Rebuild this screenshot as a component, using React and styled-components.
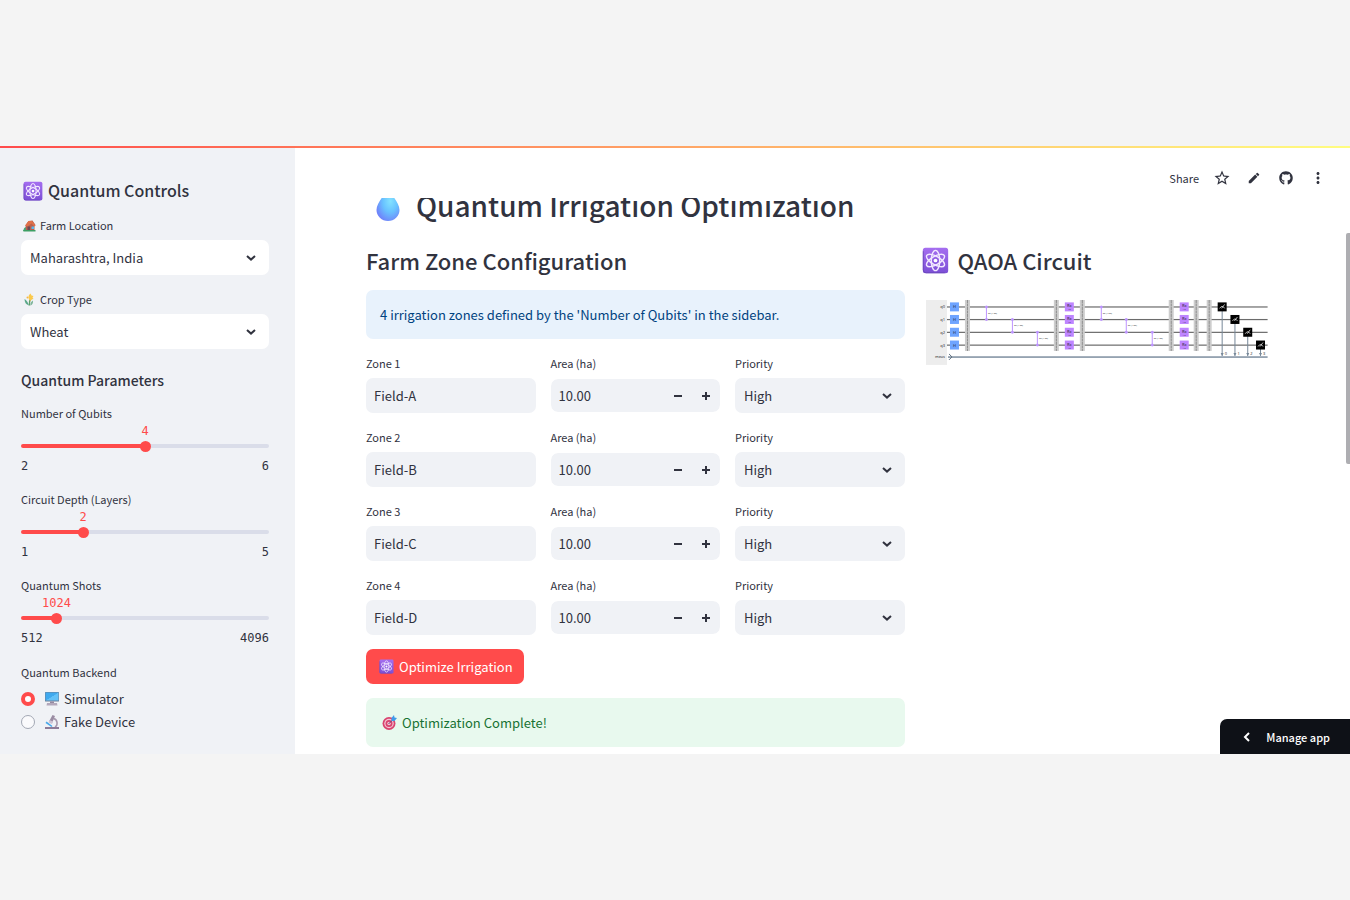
import React, { useId, useState } from "react";
import styled, { createGlobalStyle } from "styled-components";
import { MdStarBorder, MdEdit, MdMoreVert } from "react-icons/md";
import { FaGithub } from "react-icons/fa";

const ZONES = ["Field-A", "Field-B", "Field-C", "Field-D"];

// Emoji style icons

function AtomIcon({ size }) {
  const id = useId();
  return (
    <svg width={size} height={size} viewBox="0 0 32 32" aria-hidden="true">
      <defs>
        <linearGradient id={id} x1="0" y1="0" x2="0" y2="1">
          <stop offset="0" stopColor="#a56ef0" />
          <stop offset="1" stopColor="#7c4fd6" />
        </linearGradient>
      </defs>
      <rect x="1" y="1" width="30" height="30" rx="3" fill={`url(#${id})`} />
      <path d="M1.5 5v22q0 3.500 3.500 3.500h22" fill="none" stroke="#6a48b8" strokeWidth="1" />
      <g fill="none" stroke="#f2e8ff" strokeWidth="1.7">
        <ellipse cx="16" cy="16" rx="5" ry="12" />
        <ellipse cx="16" cy="16" rx="5" ry="12" transform="rotate(60 16 16)" />
        <ellipse cx="16" cy="16" rx="5" ry="12" transform="rotate(120 16 16)" />
      </g>
      <circle cx="16" cy="16" r="2.200" fill="#fff" />
    </svg>
  );
}

function DropIcon() {
  return (
    <svg width="24" height="36" viewBox="0 0 24 36" aria-hidden="true">
      <defs>
        <radialGradient id="drop" cx="0.6" cy="0.4" r="0.65">
          <stop offset="0" stopColor="#83e2ff" />
          <stop offset="0.5" stopColor="#68c2ff" />
          <stop offset="1" stopColor="#6f83fa" />
        </radialGradient>
      </defs>
      <path d="M12 1C10 7 .5 15 .5 23A11.500 11 0 0 0 23.500 23C23.500 15 14 7 12 1z" fill="url(#drop)" />
    </svg>
  );
}

function HouseIcon() {
  return (
    <svg width="13" height="13" viewBox="0 0 26 26" aria-hidden="true">
      <path d="M1 23q0-6 5-7l3-9 5 2v14z" fill="#3fa878" />
      <path d="M5 13 11 4l8-1 6 9-2 2v9H6z" fill="#b95f4d" />
      <path d="M4 13 11 4h7l7 9-2 2-6-6-8 6z" fill="#e0704a" />
      <rect x="9" y="15" width="5" height="8" fill="#6d4a55" />
      <rect x="17" y="15" width="5" height="5" fill="#56b8ee" />
      <path d="M0 22h25v3H1z" fill="#3d9e63" />
    </svg>
  );
}

function CropIcon() {
  return (
    <svg width="13" height="13" viewBox="0 0 26 26" aria-hidden="true">
      <path d="M13 25q-1-9 3-15" fill="none" stroke="#5f9d6b" strokeWidth="3" />
      <path d="M12 25q-9-3-9-13 6 3 9 13z" fill="#5aa88a" />
      <path d="M15 25q6-3 5-10-6 3-5 10z" fill="#7eb59b" />
      <path d="M12 13q-3-8 3-12l2 4 4 1-2 3 2 3-4 1-2 3z" fill="#fbc94b" />
      <circle cx="9" cy="9" r="2" fill="#f5b744" />
    </svg>
  );
}

function DesktopIcon() {
  return (
    <svg width="14" height="14" viewBox="0 0 28 28" aria-hidden="true">
      <defs>
        <linearGradient id="screen" x1="0" y1="0" x2="1" y2="1">
          <stop offset="0.5" stopColor="#3fa9ee" />
          <stop offset="0.52" stopColor="#62c1f8" />
        </linearGradient>
      </defs>
      <rect x="0" y="0" width="28" height="19" rx="1" fill="#6b7f99" />
      <rect x="1" y="1" width="26" height="16" fill="url(#screen)" />
      <path d="M10 19h8v4h-8z" fill="#9488a0" />
      <path d="M4 22h20l1 5H3z" fill="#b3a8bb" />
    </svg>
  );
}

function MicroscopeIcon() {
  return (
    <svg width="14" height="14" viewBox="0 0 28 28" aria-hidden="true">
      <path d="M17 7c9 2 9 14 3 17" fill="none" stroke="#a698ad" strokeWidth="3" />
      <path d="M15 0l5 2-6 14-6-3z" fill="#9a8ca3" />
      <path d="M9 10l7 3-2 5-7-3z" fill="#cfc4d4" />
      <path d="M3 13l12 9-2 2L1 16z" fill="#48a8ea" />
      <path d="M0 24h28v4H0z" fill="#8d7c98" />
    </svg>
  );
}

function TargetIcon() {
  return (
    <svg width="15" height="15" viewBox="0 0 30 30" aria-hidden="true">
      <circle cx="14" cy="17" r="13" fill="#d9436f" />
      <circle cx="14" cy="17" r="9.500" fill="#f3c6d4" />
      <circle cx="14" cy="17" r="7" fill="#d9436f" />
      <circle cx="14" cy="17" r="3.500" fill="#f3c6d4" />
      <path d="M13 18 22 9" stroke="#6d3f73" strokeWidth="2" />
      <path d="M19 11V6l5-6 1 5 5 1-5 6h-5z" fill="#3f9bea" />
    </svg>
  );
}

function ChevronDown() {
  return (
    <svg width="10" height="6" viewBox="0 0 10 6" aria-hidden="true">
      <path d="M1 1l4 3.600L9 1" fill="none" stroke="#31333f" strokeWidth="2" />
    </svg>
  );
}

// QAOA circuit drawing
const WIRES = [16.4, 29, 41.8, 54.6];

function Barrier({ x }) {
  return (
    <g>
      <rect x={x - 2} y="10" width="5" height="51" fill="#cdcdcd" />
      <path d={`M${x + 0.5} 10v51`} stroke="#8c8c8c" strokeWidth="1" strokeDasharray="3 0.500" />
    </g>
  );
}

function Coupling({ x, row }) {
  const top = WIRES[row];
  const bottom = WIRES[row + 1];
  return (
    <g fill="#be95ff">
      <rect x={x} y={top} width="1" height={bottom - top} />
      <circle cx={x + 0.5} cy={top + 0.5} r="1.500" />
      <circle cx={x + 0.5} cy={bottom + 0.5} r="1.500" />
      <text x={x + 2} y={top + 7.5} fontSize="2.300" fill="#222">ZZ (1.00)</text>
    </g>
  );
}

function Mixer({ x }) {
  return WIRES.map((y) => (
    <g key={y}>
      <rect x={x} y={y - 4} width="9" height="9" fill="#be85ff" />
      <text x={x + 4.5} y={y + 1} fontSize="4" textAnchor="middle" fill="#222">Rx</text>
      <text x={x + 4.5} y={y + 4} fontSize="2" textAnchor="middle" fill="#222">1.0</text>
    </g>
  ));
}

function CircuitDiagram() {
  return (
    <Diagram viewBox="0 0 360 80" role="img" aria-label="QAOA circuit">
      <rect x="7" y="10" width="21" height="65" fill="#ededed" />
      {WIRES.map((y, i) => (
        <g key={y}>
          <text x="26" y={y + 2} fontSize="4" textAnchor="end" fill="#222">q{i}</text>
          <rect x="28" y={y} width="321" height="1.200" fill="#6b6b6b" />
          <rect x="31" y={y - 4} width="9" height="9" fill="#6fa4ff" />
          <text x="35.5" y={y + 2} fontSize="4" textAnchor="middle" fill="#111">H</text>
        </g>
      ))}
      <text x="26" y="68" fontSize="4" textAnchor="end" fill="#222">meas</text>
      <rect x="29" y="66.3" width="320" height="1.700" fill="#8d9cab" />
      <path d="M30 64l3 3-3 3" fill="none" stroke="#5f7080" strokeWidth="1" />
      {[48, 137, 163, 252, 277, 290].map((x) => <Barrier key={x} x={x} />)}
      {[67, 93, 118].map((x, i) => <Coupling key={x} x={x} row={i} />)}
      {[182, 207, 233].map((x, i) => <Coupling key={x} x={x} row={i} />)}
      <Mixer x={146} />
      <Mixer x={261} />
      {WIRES.map((y, i) => {
        const x = 303 + i * 12.8;
        return (
          <g key={y}>
            <rect x={x} y={y} width="1" height={66 - y} fill="#778899" />
            <path d={`M${x - 1} 63h3l-1.500 3z`} fill="#778899" />
            <text x={x + 3} y="65" fontSize="4" fill="#222">{i}</text>
            <rect x={x - 4} y={y - 4} width="9" height="9" fill="#000" />
            <path d={`M${x - 2} ${y + 2}q2.500-4 5 0M${x} ${y + 2}l3-4`} fill="none" stroke="#fff" strokeWidth="0.7" />
          </g>
        );
      })}
    </Diagram>
  );
}

// Form parts

function SelectField({ label, icon, options, light }) {
  const id = useId();
  return (
    <div>
      <Label htmlFor={id} $icon={icon}>{icon}{label}</Label>
      <SelectBox $light={light}>
        <select id={id}>
          {options.map((option) => <option key={option}>{option}</option>)}
        </select>
        <ChevronDown />
      </SelectBox>
    </div>
  );
}

function SliderField({ label, min, max, step = 1, initial }) {
  const id = useId();
  const [value, setValue] = useState(initial);
  const percent = ((value - min) / (max - min)) * 100;
  return (
    <div>
      <SliderLabel htmlFor={id}>{label}</SliderLabel>
      <ValueRow>
        <Value htmlFor={id} style={{ left: `${percent}%` }}>{value}</Value>
      </ValueRow>
      <Track style={{ "--fill": `${percent}%` }}>
        <Range
          id={id}
          type="range"
          min={min}
          max={max}
          step={step}
          value={value}
          onChange={(e) => setValue(Number(e.target.value))}
        />
      </Track>
      <Limits>
        <span>{min}</span>
        <span>{max}</span>
      </Limits>
    </div>
  );
}

function ZoneRow({ number, name }) {
  const id = useId();
  const [area, setArea] = useState("10.00");
  const change = (by) => setArea((Number(area) + by).toFixed(2));
  return (
    <Zone>
      <div>
        <Label htmlFor={`${id}-name`}>Zone {number}</Label>
        <TextInput id={`${id}-name`} defaultValue={name} />
      </div>
      <div>
        <Label htmlFor={`${id}-area`}>Area (ha)</Label>
        <NumberBox>
          <input
            id={`${id}-area`}
            type="number"
            step="0.01"
            value={area}
            onChange={(e) => setArea(e.target.value)}
          />
          <button type="button" aria-label="Decrease area" onClick={() => change(-1)}>
            <svg width="8" height="8" viewBox="0 0 8 8"><path d="M0 4h8" stroke="#31333f" strokeWidth="2" /></svg>
          </button>
          <button type="button" aria-label="Increase area" onClick={() => change(1)}>
            <svg width="8" height="8" viewBox="0 0 8 8"><path d="M0 4h8M4 0v8" stroke="#31333f" strokeWidth="2" /></svg>
          </button>
        </NumberBox>
      </div>
      <SelectField label="Priority" options={["High", "Medium", "Low"]} />
    </Zone>
  );
}

export default function App() {
  return (
    <>
      <GlobalStyle />
      <Shell>
        <Sidebar>
          <SideTitle><AtomIcon size={20} />Quantum Controls</SideTitle>
          <SelectField light icon={<HouseIcon />} label="Farm Location" options={["Maharashtra, India"]} />
          <SelectField light icon={<CropIcon />} label="Crop Type" options={["Wheat"]} />
          <SideHeading>Quantum Parameters</SideHeading>
          <SliderField label="Number of Qubits" min={2} max={6} initial={4} />
          <SliderField label="Circuit Depth (Layers)" min={1} max={5} initial={2} />
          <SliderField label="Quantum Shots" min={512} max={4096} step={512} initial={1024} />
          <RadioGroup>
            <legend>Quantum Backend</legend>
            <RadioLabel>
              <input type="radio" name="backend" defaultChecked />
              <DesktopIcon />
              Simulator
            </RadioLabel>
            <RadioLabel>
              <input type="radio" name="backend" />
              <MicroscopeIcon />
              Fake Device
            </RadioLabel>
          </RadioGroup>
        </Sidebar>
        <Main>
          <Toolbar>
            <ToolButton type="button">Share</ToolButton>
            <ToolButton type="button" aria-label="Favorite"><MdStarBorder size={18} /></ToolButton>
            <ToolButton type="button" aria-label="Edit"><MdEdit size={14} /></ToolButton>
            <ToolButton type="button" aria-label="GitHub"><FaGithub size={14} /></ToolButton>
            <ToolButton type="button" aria-label="More"><MdMoreVert size={18} /></ToolButton>
          </Toolbar>
          <Content>
            <Title><DropIcon />Quantum Irrigation Optimization</Title>
            <Columns>
              <Column>
                <Heading>Farm Zone Configuration</Heading>
                <Alert>4 irrigation zones defined by the 'Number of Qubits' in the sidebar.</Alert>
                {ZONES.map((name, index) => (
                  <ZoneRow key={name} number={index + 1} name={name} />
                ))}
                <PrimaryButton type="button"><AtomIcon size={15} />Optimize Irrigation</PrimaryButton>
                <Alert $success><TargetIcon />Optimization Complete!</Alert>
              </Column>
              <Column>
                <Heading><AtomIcon size={27} />QAOA Circuit</Heading>
                <CircuitDiagram />
              </Column>
            </Columns>
          </Content>
          <ScrollThumb />
        </Main>
        <ManageButton type="button">
          <svg width="7" height="10" viewBox="0 0 7 10" aria-hidden="true">
            <path d="M6 1L2 5l4 4" fill="none" stroke="#fff" strokeWidth="2" />
          </svg>
          Manage app
        </ManageButton>
      </Shell>
    </>
  );
}

const GlobalStyle = createGlobalStyle`
  * {
    box-sizing: border-box;
  }
  body {
    margin: 0;
    background: #f4f4f4;
    color: #31333f;
    font-family: "Noto Sans CJK SC", "Open Sans", sans-serif;
    font-size: 13px;
  }
  h1, h2, h3 {
    margin: 0;
    font-weight: 500;
  }
  button, input, select {
    font: inherit;
    color: inherit;
  }
  svg {
    flex: none;
  }
`;

const Shell = styled.div`
  position: relative;
  display: flex;
  height: calc(100vh - 292px);
  min-height: 608px;
  margin: 146px 0;
  overflow: hidden;
  background: linear-gradient(90deg, #ff4b4b, #fffd80) top / 100% 2px no-repeat #fff;
  padding-top: 2px;
`;

const Sidebar = styled.aside`
  flex: none;
  width: 295px;
  padding: 32px 26px 0 21px;
  display: flex;
  flex-direction: column;
  gap: 14px;
  background: #f0f2f6;
`;

const SideTitle = styled.h2`
  display: flex;
  align-items: center;
  gap: 5px;
  padding-left: 2px;
  font-size: 16px;
  line-height: 21px;
`;

const SideHeading = styled.h3`
  padding-top: 7px;
  font-size: 14px;
  line-height: 20px;
`;

const Label = styled.label`
  display: flex;
  align-items: center;
  gap: 4px;
  margin-bottom: 4px;
  padding-left: ${(p) => (p.$icon ? "2px" : 0)};
  font-size: 11px;
  line-height: 21px;
`;

const SliderLabel = styled.label`
  display: block;
  padding-bottom: 2px;
  font-size: 11px;
  line-height: 19px;
`;

const SelectBox = styled.div`
  position: relative;
  select {
    display: block;
    width: 100%;
    height: 35px;
    padding: 0 30px 0 9px;
    border: 0;
    border-radius: 7px;
    appearance: none;
    background: ${(p) => (p.$light ? "#fff" : "#f0f2f6")};
  }
  svg {
    position: absolute;
    right: 13px;
    top: 15px;
    pointer-events: none;
  }
`;

const ValueRow = styled.div`
  position: relative;
  height: 13px;
  font-family: "DejaVu Sans Mono", monospace;
  font-size: 12px;
  line-height: 13px;
  color: #ff4b4b;
`;

const Value = styled.output`
  position: absolute;
  transform: translateX(-50%);
`;

const Track = styled.div`
  height: 16px;
  display: flex;
  align-items: center;
  &::before {
    content: "";
    flex: none;
    width: 100%;
    height: 4px;
    border-radius: 2px;
    background: linear-gradient(90deg, #ff4b4b var(--fill), #dadde9 var(--fill));
  }
`;

const Range = styled.input`
  flex: none;
  width: calc(100% + 10px);
  height: 16px;
  margin: 0 0 0 calc(-100% - 5px);
  appearance: none;
  background: transparent;
  &::-webkit-slider-thumb {
    appearance: none;
    width: 11px;
    height: 11px;
    border-radius: 50%;
    background: #ff4b4b;
  }
`;

const Limits = styled.div`
  display: flex;
  justify-content: space-between;
  padding: 3px 0 1px;
  font-family: "DejaVu Sans Mono", monospace;
  font-size: 12px;
  line-height: 18px;
`;

const RadioGroup = styled.fieldset`
  margin: 0;
  padding: 0;
  border: 0;
  legend {
    padding: 0 0 4px;
    font-size: 11px;
    line-height: 21px;
  }
`;

const RadioLabel = styled.label`
  display: flex;
  align-items: center;
  line-height: 23px;
  input {
    appearance: none;
    width: 14px;
    height: 14px;
    margin: 0 10px 0 0;
    border: 1px solid #a3a8b4;
    border-radius: 50%;
    background: #fafafc;
  }
  input:checked {
    border: 4px solid #ff4b4b;
    background: #fff;
  }
  svg {
    margin-right: 5px;
  }
`;

const Main = styled.main`
  position: relative;
  flex: 1;
  min-width: 0;
  display: flex;
  flex-direction: column;
`;

const Toolbar = styled.header`
  flex: none;
  display: flex;
  justify-content: flex-end;
  align-items: center;
  gap: 14px;
  height: 50px;
  padding: 10px 23px 0 0;
`;

const ToolButton = styled.button`
  display: flex;
  justify-content: center;
  min-width: 18px;
  padding: 0;
  border: 0;
  background: none;
  font-size: 11px;
`;

const Content = styled.div`
  flex: 1;
  min-height: 0;
  overflow: hidden;
  padding: 0 71px;
`;

const Title = styled.h1`
  display: flex;
  align-items: center;
  gap: 16px;
  margin-top: -11px;
  padding-left: 10px;
  font-size: 28px;
  line-height: 36px;
  white-space: nowrap;
`;

const Columns = styled.div`
  display: grid;
  grid-template-columns: 3fr 2fr;
  gap: 14px;
  margin-top: 22px;
`;

const Column = styled.section`
  display: flex;
  flex-direction: column;
  align-items: flex-start;
  gap: 14px;
  min-width: 0;
`;

const Heading = styled.h2`
  display: flex;
  align-items: center;
  gap: 8px;
  padding-bottom: 1px;
  font-size: 22px;
  line-height: 30px;
  svg {
    margin-left: 3px;
  }
`;

const Alert = styled.div`
  display: flex;
  align-items: center;
  gap: 5px;
  width: 100%;
  min-height: 49px;
  padding: 10px ${(p) => (p.$success ? "16px" : "14px")};
  border-radius: 7px;
  background: ${(p) => (p.$success ? "#e8f9ee" : "#e8f2fc")};
  color: ${(p) => (p.$success ? "#177233" : "#004280")};
`;

const Zone = styled.div`
  display: grid;
  grid-template-columns: repeat(3, minmax(0, 1fr));
  gap: 14px;
  width: 100%;
`;

const TextInput = styled.input`
  display: block;
  width: 100%;
  height: 35px;
  padding: 0 8px;
  border: 0;
  border-radius: 7px;
  background: #f0f2f6;
`;

const NumberBox = styled.div`
  display: flex;
  height: 35px;
  border: 1px solid #fff;
  border-radius: 8px;
  background: #f0f2f6;
  background-clip: padding-box;
  input {
    flex: 1;
    min-width: 0;
    padding: 0 7px;
    border: 0;
    background: none;
    appearance: textfield;
  }
  input::-webkit-inner-spin-button {
    display: none;
  }
  button {
    display: flex;
    align-items: center;
    justify-content: center;
    width: 28px;
    padding: 0;
    border: 0;
    background: none;
  }
`;

const PrimaryButton = styled.button`
  display: flex;
  align-items: center;
  gap: 5px;
  height: 35px;
  padding: 0 11px 0 13px;
  border: 0;
  border-radius: 7px;
  background: #ff4b4b;
  color: #fff;
`;

const Diagram = styled.svg`
  display: block;
  width: 100%;
  font-family: "Open Sans", sans-serif;
`;

const ScrollThumb = styled.div`
  position: absolute;
  top: 85px;
  right: 0;
  width: 4px;
  height: 231px;
  border-radius: 2px 0 0 2px;
  background: #aeaeb2;
`;

const ManageButton = styled.button`
  position: absolute;
  right: 0;
  bottom: 0;
  display: flex;
  align-items: center;
  gap: 16px;
  height: 35px;
  padding: 0 20px 0 23px;
  border: 0;
  border-radius: 7px 0 0 0;
  background: #0e1117;
  color: #fff;
  font-size: 11px;
  font-weight: 500;
`;
